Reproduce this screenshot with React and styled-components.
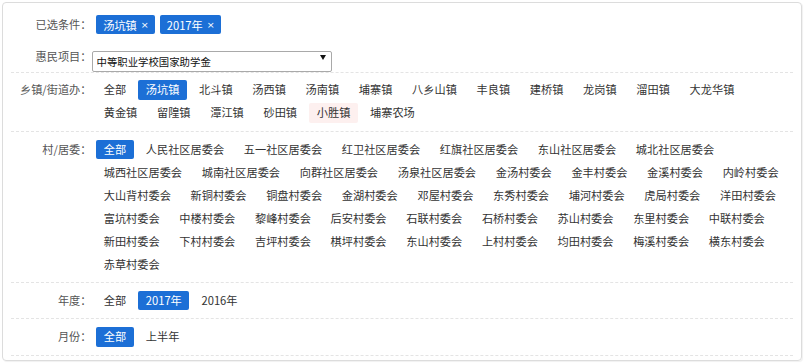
import React from 'react'
import styled, { createGlobalStyle } from 'styled-components'

const GlobalStyle = createGlobalStyle`
    body {
        margin: 0;
        background: #fff;
        font-family: "Noto Sans CJK SC", "Noto Sans", sans-serif;
        color: #333;
    }
`

const Panel = styled.div`
    margin: 2px;
    width: 800px;
    box-sizing: border-box;
    border: 1px solid #dcdcdc;
    border-radius: 4px;
    box-shadow: 1px 1px 1px rgba(0,0,0,0.06);
    padding: 0 8px 4px;
`

const Section = styled.div`
    display: flex;
    flex-direction: ${({ $stack }) => ($stack ? 'column' : 'row')};
    gap: ${({ $stack }) => ($stack ? '12px' : '0')};
    padding: ${({ $top }) => ($top ? '12px 0 4px' : '7.8px 0 8px')};
    border-bottom: 1px dashed #e4e4e4;
`

const Row = styled.div`
    display: flex;
    align-items: center;
`

const Label = styled.div`
    width: 80.5px;
    flex-shrink: 0;
    text-align: right;
    font-size: 11.2px;
    line-height: 19.5px;
    color: #555;
    white-space: nowrap;
`

const Options = styled.div`
    flex: 1;
    display: flex;
    flex-wrap: wrap;
    column-gap: 4.7px;
    row-gap: 3.5px;
    padding-left: 4.7px;
`

const Option = styled.span`
    padding: 0 7.5px;
    font-size: 11.2px;
    line-height: 19.5px;
    border-radius: 2px;
    white-space: nowrap;
    cursor: pointer;
    color: ${({ $active }) => ($active ? '#fff' : '#333')};
    background: ${({ $active, $hover }) => ($active ? '#1c6fd6' : $hover ? '#fdf0ef' : 'transparent')};
`

const Tags = styled.div`
    display: flex;
    gap: 5px;
    padding-left: 4.7px;
`

const Tag = styled.span`
    display: inline-flex;
    align-items: center;
    gap: 4px;
    height: 19px;
    padding: 0 6px 0 7px;
    background: #1c6fd6;
    color: #fff;
    font-size: 11.2px;
    border-radius: 2px;
`

const Close = styled.span`
    font-size: 9.5px;
    font-family: "DejaVu Sans", sans-serif;
`

const SelectBox = styled.div`
    position: relative;
    width: 240px;
    height: 21px;
    box-sizing: border-box;
`

const Select = styled.select`
    appearance: none;
    width: 100%;
    height: 100%;
    box-sizing: border-box;
    border: 1px solid #a9a9a9;
    border-radius: 2px;
    padding: 0 4px;
    background: #fff;
    font-family: "Noto Sans CJK SC", sans-serif;
    font-size: 10.4px;
    color: #111;
    outline: none;
`

const Arrow = styled.svg`
    position: absolute;
    right: 6px;
    top: 8px;
    pointer-events: none;
`

const towns = ['全部', '汤坑镇', '北斗镇', '汤西镇', '汤南镇', '埔寨镇', '八乡山镇', '丰良镇', '建桥镇', '龙岗镇', '溜田镇', '大龙华镇', '黄金镇', '留隍镇', '潭江镇', '砂田镇', '小胜镇', '埔寨农场']

const villages = ['全部', '人民社区居委会', '五一社区居委会', '红卫社区居委会', '红旗社区居委会', '东山社区居委会', '城北社区居委会',
    '城西社区居委会', '城南社区居委会', '向群社区居委会', '汤泉社区居委会', '金汤村委会', '金丰村委会', '金溪村委会', '内岭村委会',
    '大山背村委会', '新铜村委会', '铜盘村委会', '金湖村委会', '邓屋村委会', '东秀村委会', '埔河村委会', '虎局村委会', '洋田村委会',
    '富坑村委会', '中楼村委会', '黎峰村委会', '后安村委会', '石联村委会', '石桥村委会', '苏山村委会', '东里村委会', '中联村委会',
    '新田村委会', '下村村委会', '吉坪村委会', '棋坪村委会', '东山村委会', '上村村委会', '均田村委会', '梅溪村委会', '横东村委会',
    '赤草村委会']

const FilterRow = ({ label, items, active, hover }) => (
    <Section>
        <Label>{label}</Label>
        <Options>
            {items.map(it => (
                <Option key={it} $active={it === active} $hover={it === hover}>{it}</Option>
            ))}
        </Options>
    </Section>
)

const App = () => {
    return (
        <>
            <GlobalStyle />
            <Panel>
                <Section $top $stack>
                    <Row>
                        <Label>已选条件：</Label>
                        <Tags>
                            <Tag>汤坑镇 <Close>×</Close></Tag>
                            <Tag>2017年 <Close>×</Close></Tag>
                        </Tags>
                    </Row>
                    <Row>
                        <Label>惠民项目：</Label>
                        <SelectBox>
                            <Select defaultValue="zz">
                                <option value="zz">中等职业学校国家助学金</option>
                            </Select>
                            <Arrow width="6" height="5" viewBox="0 0 6 5">
                                <path d="M0 0 H6 L3 5 Z" fill="#111" />
                            </Arrow>
                        </SelectBox>
                    </Row>
                </Section>
                <FilterRow label="乡镇/街道办：" items={towns} active="汤坑镇" hover="小胜镇" />
                <FilterRow label="村/居委：" items={villages} active="全部" />
                <FilterRow label="年度：" items={['全部', '2017年', '2016年']} active="2017年" />
                <FilterRow label="月份：" items={['全部', '上半年']} active="全部" />
            </Panel>
        </>
    )
}

export default App
